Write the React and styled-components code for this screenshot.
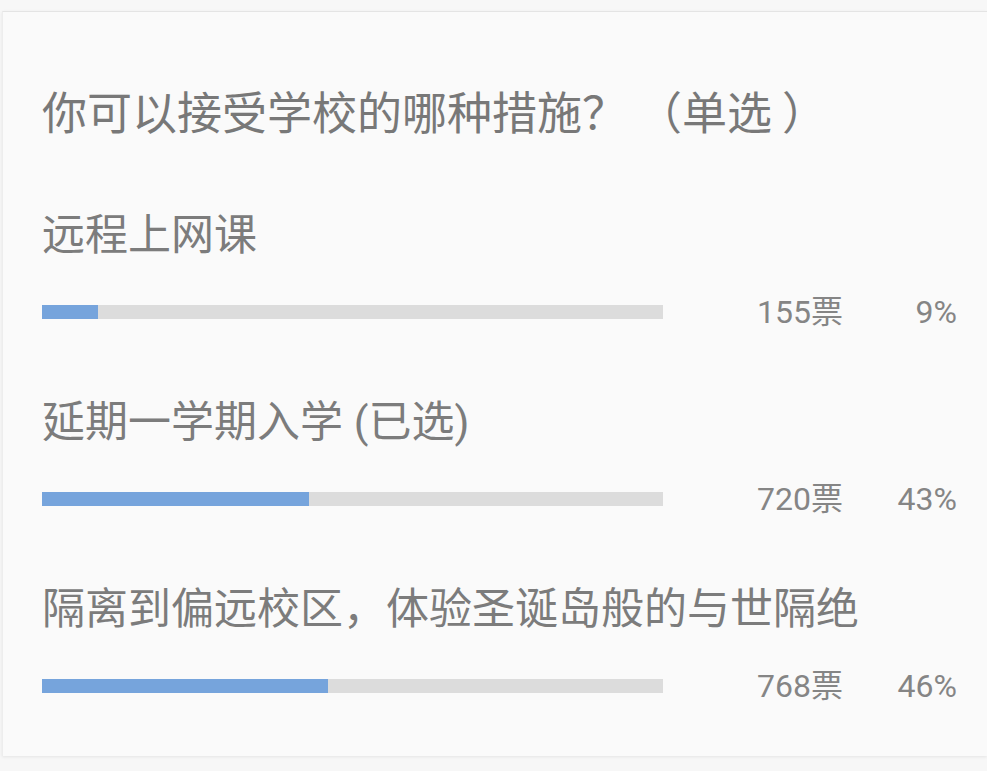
import React from "react";
import styled, { createGlobalStyle } from "styled-components";

const Global = createGlobalStyle`
  html, body {
    margin: 0;
    padding: 0;
    background: #f7f7f7;
  }
  body {
    font-family: Roboto, "Noto Sans CJK SC", "Noto Sans", sans-serif;
  }
`;

const Page = styled.div`
  width: 987px;
  height: 771px;
  padding-top: 11px;
  box-sizing: border-box;
  overflow: hidden;
`;

const Card = styled.div`
  margin-left: 2px;
  height: 745px;
  box-sizing: border-box;
  background: #fafafa;
  border-top: 1px solid #e4e4e4;
  border-left: 1px solid #ededed;
  box-shadow: 0 1px 3px rgba(0, 0, 0, 0.08);
  padding: 80px 30px 0 39px;
`;

const Title = styled.div`
  font-size: 45px;
  line-height: 45px;
  color: #787878;
  white-space: nowrap;
  margin-bottom: 77px;
`;

const Spaced = styled.span`
  margin-left: ${(p) => p.$gap}px;
`;

const Option = styled.div`
  display: flex;
  flex-direction: column;
  margin-bottom: 73px;
`;

const Label = styled.div`
  font-size: 43px;
  line-height: 43px;
  color: #7c7c7c;
  white-space: nowrap;
  margin-bottom: 39px;
`;

const Row = styled.div`
  display: grid;
  grid-template-columns: 621px 1fr auto;
  align-items: center;
  height: 32px;
`;

const Track = styled.div`
  height: 14px;
  background: #dcdcdc;
  overflow: hidden;
`;

const Fill = styled.div`
  height: 100%;
  background: #76a4dc;
`;

const Count = styled.div`
  font-size: 32px;
  line-height: 32px;
  color: #858585;
  margin-left: 94px;
  white-space: nowrap;
`;

const Percent = styled.div`
  font-size: 32px;
  line-height: 32px;
  color: #858585;
  text-align: right;
  white-space: nowrap;
`;

const options = [
  { label: "远程上网课", votes: 155, pct: 9 },
  { label: "延期一学期入学 (已选)", votes: 720, pct: 43 },
  { label: "隔离到偏远校区，体验圣诞岛般的与世隔绝", votes: 768, pct: 46 },
];

export default function App() {
  return (
    <Page>
      <Global />
      <Card>
        <Title>
          你可以接受学校的哪种措施？<Spaced $gap={10}>（单选</Spaced>
          <Spaced $gap={10}>）</Spaced>
        </Title>
        {options.map((o) => (
          <Option key={o.label}>
            <Label>{o.label}</Label>
            <Row>
              <Track>
                <Fill style={{ width: `${o.pct}%` }} />
              </Track>
              <Count>{o.votes}票</Count>
              <Percent>{o.pct}%</Percent>
            </Row>
          </Option>
        ))}
      </Card>
    </Page>
  );
}
